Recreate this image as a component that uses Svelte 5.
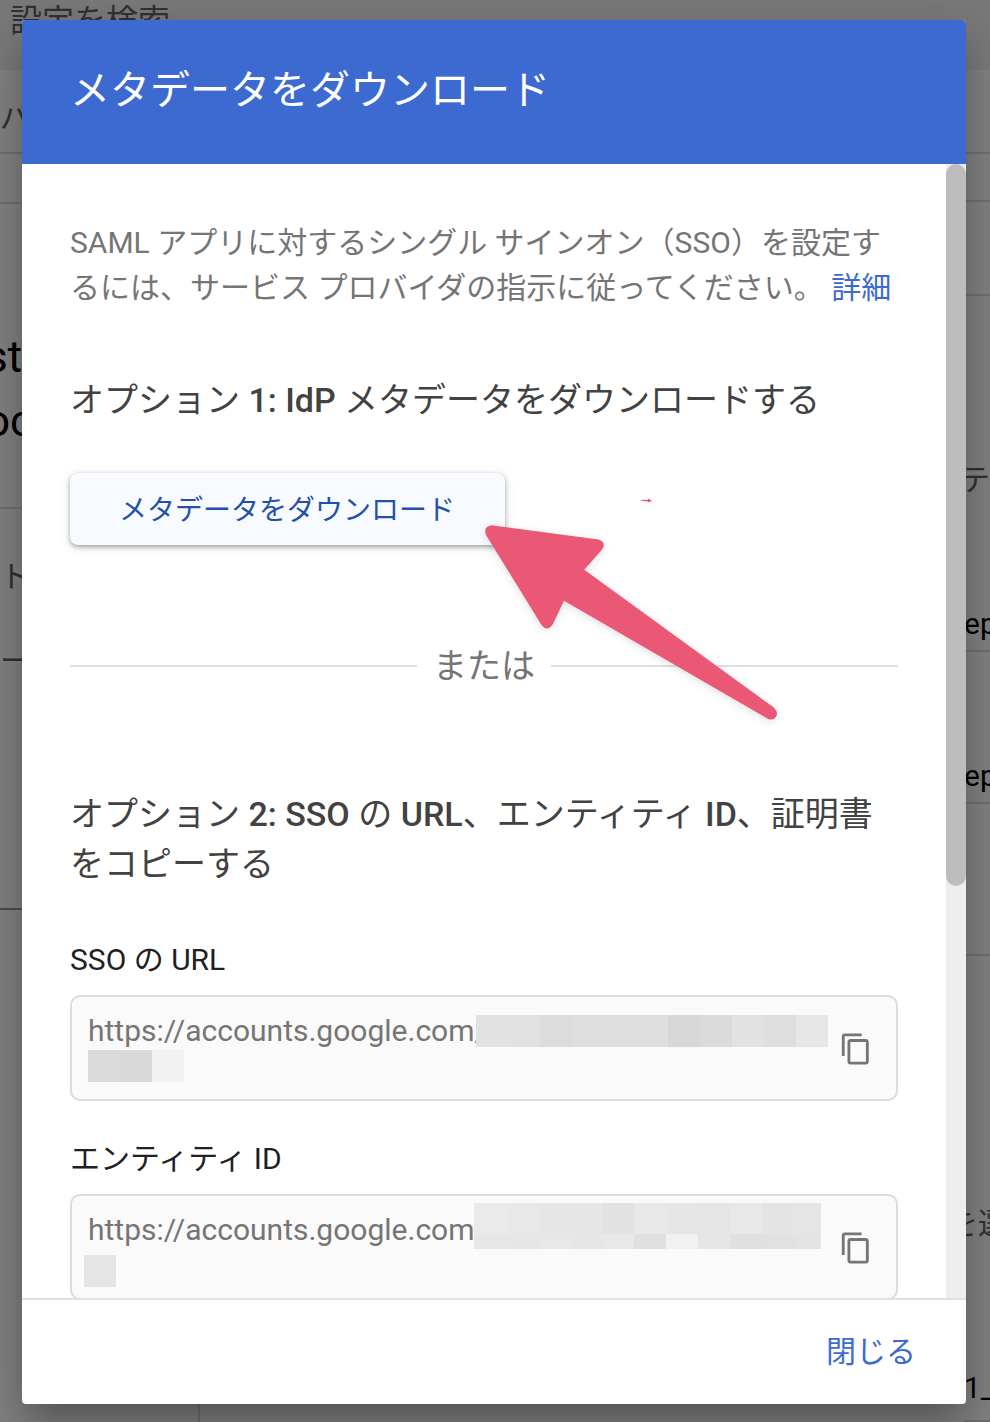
<script>
	let fields = [
		{
			id: 'sso-url',
			label: 'SSO の URL',
			value: 'https://accounts.google.com/',
			masks: [
				{
					name: 'first',
					cells: ['#e2e2e2', '#e1e1e1', '#dcdcdc', '#dedede', '#dedede', '#dedede', '#d7d7d7', '#dbdbdb', '#e2e2e2', '#dedede', '#e7e7e7']
				},
				{ name: 'second', cells: ['#dadada', '#d9d9d9', '#f1f1f1'] }
			]
		},
		{
			id: 'entity-id',
			label: 'エンティティ ID',
			value: 'https://accounts.google.com/',
			masks: [
				{
					name: 'tall',
					cells: ['#eaeaea', '#e8e8e8', '#e6e6e6', '#e6e6e6', '#e2e2e2', '#e8e8e8', '#e6e6e6', '#e5e5e5', '#e8e8e8', '#e4e4e4', '#e5e5e5']
				},
				{
					name: 'short',
					cells: ['#e7e7e7', '#e6e6e6', '#e8e8e8', '#e6e6e6', '#e8e8e8', '#e0e0e0', '#f1f1f1', '#e5e5e5', '#e0e0e0', '#e1e1e1', '#e3e3e3']
				},
				{ name: 'single', cells: ['#e5e5e5'] }
			]
		}
	];

	let open = true;

	function close() {
		open = false;
	}

	function copy(value) {
		navigator.clipboard?.writeText(value);
	}
</script>

<div class="app">
	<div class="page" aria-hidden="true">
		<div class="topbar">設定を検索</div>
		<div class="columns">
			<div class="left">
				<div class="row crumb">バ</div>
				<div class="row gap"></div>
				<div class="row name"><span>st</span><span>oc</span></div>
				<div class="row card"><span>ト</span><span>ー</span></div>
			</div>
			<div class="right">
				<div class="row r1"></div>
				<div class="row r2"></div>
				<div class="row r3"></div>
				<div class="row r4"><span class="muted">テ</span><span>ep</span></div>
				<div class="row r5">ep</div>
				<div class="row r6"></div>
				<div class="row r7"><span class="muted hint">を選</span><span>1_</span></div>
			</div>
		</div>
	</div>

	{#if open}
		<div class="scrim">
			<div class="dialog" role="dialog" aria-modal="true" aria-labelledby="dialog-title">
				<header>
					<h1 id="dialog-title">メタデータをダウンロード</h1>
				</header>

				<div class="body">
					<div class="content">
						<p class="intro">
							SAML アプリに対するシングル サインオン（SSO）を設定するには、サービス プロバイダの指示に従ってください。
							<a href="#details">詳細</a>
						</p>

						<h2>オプション <b>1: IdP</b> メタデータをダウンロードする</h2>
						<div class="action">
							<button class="download" type="button">メタデータをダウンロード</button>
							<svg class="pointer" viewBox="480 490 310 240" aria-hidden="true">
								<path d="M491.5 525.3 L598.5 539.5 Q606.5 542.5 602.3 549.2 L584.3 569.8 L773.8 707.6 Q779.5 713.5 775 718 Q771 721 766.5 718 L564 600.8 L552.8 624.3 Q547.5 632 541.8 625.5 L486 535 Q483 526.5 491.5 525.3 Z" />
								<path d="M641 500 L648 499.8 L648 498.6 L652 500.8 L648 502.6 L648 501.4 L641 500.8 Z" />
							</svg>
						</div>

						<div class="or"><span>または</span></div>

						<h2>オプション <b>2: SSO</b> の <b>URL</b>、エンティティ <b>ID</b>、証明書をコピーする</h2>
						<div class="fields">
							{#each fields as field}
								<div class="field">
									<label for={field.id}>{field.label}</label>
									<div class="box">
										<textarea id={field.id} rows="2" readonly value={field.value}></textarea>
										<button class="copy" type="button" aria-label="コピー" on:click={() => copy(field.value)}>
											<svg viewBox="0 0 24 24">
												<path d="M16 1H4c-1.1 0-2 .9-2 2v14h2V3h12V1zm3 4H8c-1.1 0-2 .9-2 2v14c0 1.1.9 2 2 2h11c1.1 0 2-.9 2-2V7c0-1.1-.9-2-2-2zm0 16H8V7h11v14z" />
											</svg>
										</button>
										{#each field.masks as mask}
											<div class="mask {mask.name}">
												{#each mask.cells as color}
													<i style="background: {color}"></i>
												{/each}
											</div>
										{/each}
									</div>
								</div>
							{/each}
						</div>
					</div>
					<div class="track"><div class="thumb"></div></div>
				</div>

				<footer>
					<button class="close" type="button" on:click={close}>閉じる</button>
				</footer>
			</div>
		</div>
	{/if}
</div>

<style>
	.app {
		position: relative;
		height: 100vh;
		overflow: hidden;
		font-family: Roboto, "Noto Sans CJK JP", sans-serif;
	}
	.page {
		height: 100%;
		display: flex;
		flex-direction: column;
		background: #fff;
		color: #000;
		font-size: 30px;
	}
	.topbar {
		height: 70px;
		box-sizing: border-box;
		padding-left: 10px;
		background: #f1f1f1;
		color: #5f6368;
		font-size: 32px;
		line-height: 42px;
	}
	.columns {
		flex: 1;
		display: flex;
		justify-content: space-between;
	}
	.left {
		width: 198px;
		border-right: 2px solid #dadce0;
	}
	.right {
		width: 26px;
	}
	.row {
		box-sizing: border-box;
		display: flex;
		flex-direction: column;
		border-bottom: 2px solid #dadce0;
		white-space: nowrap;
		line-height: 40px;
	}
	.muted, .crumb, .card {
		color: #5f6368;
	}
	.muted {
		margin-left: -4px;
	}
	.hint {
		margin-left: -16px;
	}
	.crumb {
		height: 84px;
		padding-top: 28px;
	}
	.gap {
		height: 50px;
	}
	.name {
		height: 305px;
		padding-top: 121px;
		font-size: 44px;
		line-height: 64px;
		align-items: flex-start;
	}
	.name span {
		margin-left: -15px;
	}
	.card {
		height: 401px;
		padding-top: 48px;
		gap: 44px;
		border-bottom-color: #999;
	}
	.r1 { height: 84px; }
	.r2 { height: 48px; }
	.r3 { height: 94px; }
	.r4 {
		height: 356px;
		padding-top: 164px;
		gap: 104px;
	}
	.r5 {
		height: 152px;
		padding-top: 104px;
	}
	.r6 { height: 152px; }
	.r7 {
		height: 466px;
		padding-top: 248px;
		gap: 124px;
	}

	.scrim {
		position: absolute;
		inset: 0;
		display: flex;
		padding: 20px 24px 18px 22px;
		background: rgba(0, 0, 0, 0.5);
	}
	.dialog {
		flex: 1;
		min-width: 0;
		display: flex;
		flex-direction: column;
		overflow: hidden;
		background: #fff;
		border-radius: 4px;
		box-shadow: 0 22px 30px -14px rgba(0, 0, 0, 0.2), 0 24px 38px 3px rgba(0, 0, 0, 0.14), 0 9px 46px 8px rgba(0, 0, 0, 0.06);
	}
	header {
		padding: 41px 48px 43px;
		background: #3d6ad0;
		color: #fff;
	}
	h1 {
		margin: 0;
		font-size: 40px;
		line-height: 60px;
		font-weight: 400;
	}
	.body {
		flex: 1;
		min-height: 0;
		display: flex;
	}
	.content {
		flex: 1;
		min-width: 0;
		padding: 56px 48px;
		overflow-y: auto;
		scrollbar-width: none;
	}
	.track {
		width: 20px;
		background: #eee;
	}
	.thumb {
		height: 63.7%;
		border-radius: 10px;
		background: #bdbdbd;
	}
	.intro {
		margin: 0 0 65px;
		color: #757575;
		font-size: 30px;
		line-height: 45px;
	}
	a {
		color: #3d6ad0;
		text-decoration: none;
	}
	h2 {
		margin: 0;
		color: #424242;
		font-size: 34px;
		line-height: 50px;
		font-weight: 400;
	}
	b {
		font-weight: 500;
	}
	.action {
		position: relative;
		display: flex;
		margin: 48px 0 96px;
	}
	.download {
		height: 72px;
		padding: 0 50px 2px 49px;
		border: 0;
		border-radius: 8px;
		background: #f7faff;
		box-shadow: 0 2px 4px rgba(60, 64, 67, 0.4), 0 2px 12px rgba(0, 0, 0, 0.12);
		color: #2451a8;
		font: 28px Roboto, "Noto Sans CJK JP", sans-serif;
		cursor: pointer;
	}
	.pointer {
		position: absolute;
		z-index: 1;
		left: 410px;
		top: 17px;
		width: 310px;
		height: 240px;
		fill: #eb5875;
		filter: drop-shadow(0 2px 4px rgba(0, 0, 0, 0.12));
		pointer-events: none;
	}
	.or {
		display: flex;
		align-items: center;
		gap: 16px;
		margin-bottom: 98px;
		color: #757575;
		font-size: 34px;
		line-height: 50px;
	}
	.or::before, .or::after {
		content: '';
		flex: 1;
		height: 2px;
		background: #e0e0e0;
	}
	.fields {
		display: flex;
		flex-direction: column;
		gap: 40px;
		margin-top: 53px;
	}
	label {
		display: block;
		margin-bottom: 17px;
		color: #212121;
		font-size: 30px;
		line-height: 36px;
	}
	.box {
		position: relative;
		display: flex;
		align-items: center;
		gap: 8px;
		padding: 16px 15px 14px 16px;
		border: 2px solid #dcdcdc;
		border-radius: 10px;
		background: #fafafa;
	}
	textarea {
		flex: 1;
		min-width: 0;
		height: 72px;
		padding: 0;
		border: 0;
		outline: none;
		resize: none;
		overflow: hidden;
		background: none;
		color: #757575;
		font: 30px/36px Roboto, "Noto Sans CJK JP", sans-serif;
	}
	.copy {
		display: flex;
		padding: 8px;
		border: 0;
		background: none;
		cursor: pointer;
	}
	.copy svg {
		width: 34px;
		height: 34px;
		fill: #757575;
	}
	.mask {
		position: absolute;
		display: flex;
		overflow: hidden;
	}
	.mask i {
		flex: none;
		width: 32px;
		height: 32px;
	}
	.first { left: 404px; top: 18px; }
	.second { left: 16px; top: 53px; }
	.tall { left: 402px; top: 7px; width: 347px; }
	.short { left: 402px; top: 38px; width: 347px; }
	.short i { height: 15px; }
	.single { left: 12px; top: 59px; }
	footer {
		display: flex;
		justify-content: flex-end;
		padding: 19px 34px 25px;
		border-top: 2px solid #e0e0e0;
	}
	.close {
		height: 60px;
		padding: 0 16px;
		border: 0;
		background: none;
		color: #3d6ad0;
		font: 30px Roboto, "Noto Sans CJK JP", sans-serif;
		cursor: pointer;
	}
</style>
